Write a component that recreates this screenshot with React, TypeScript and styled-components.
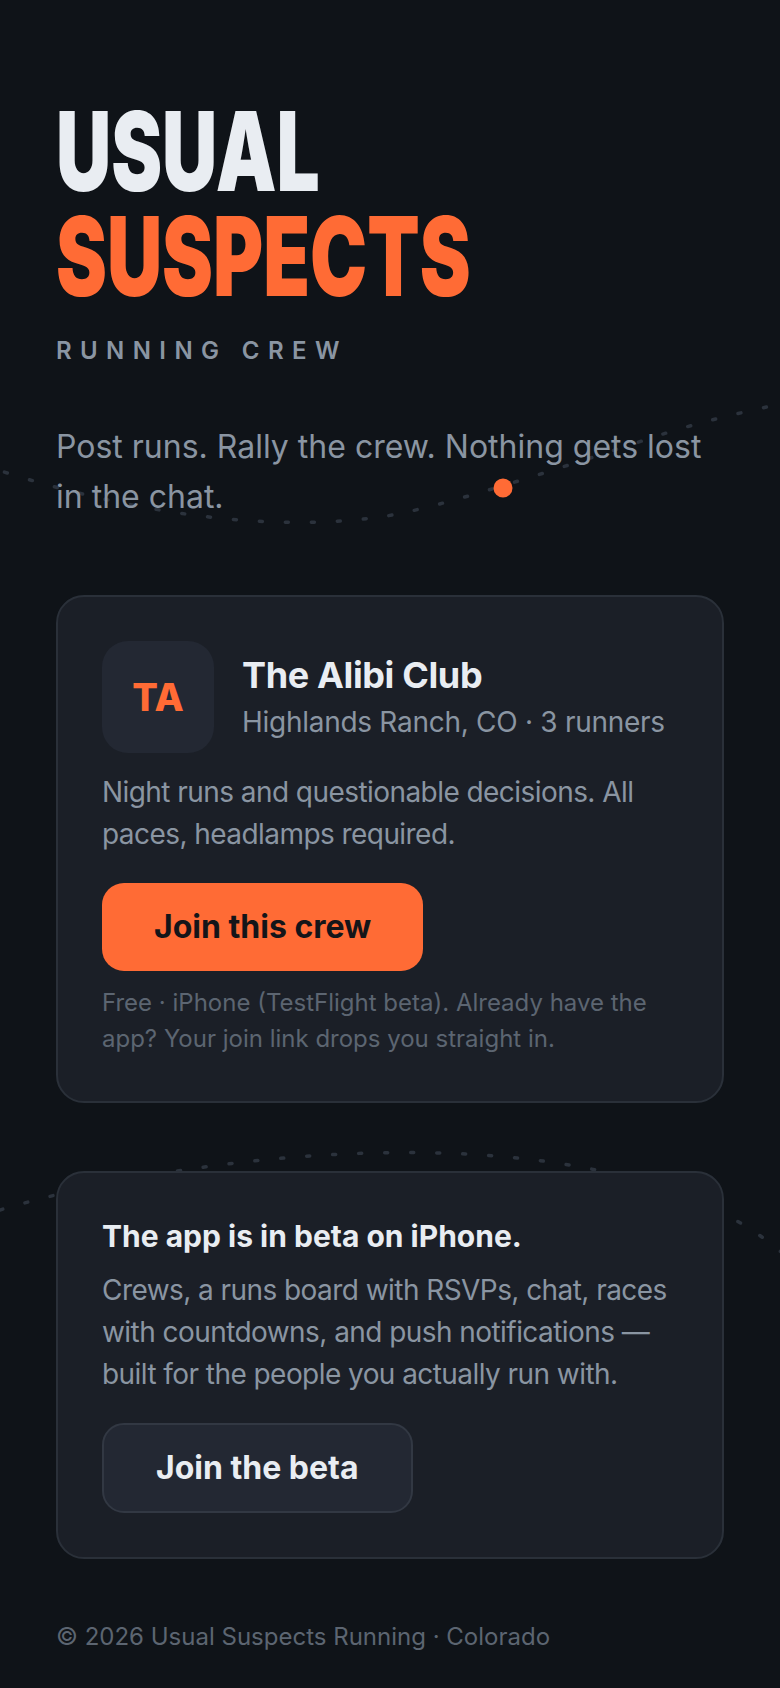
import React from 'react';
import styled, { createGlobalStyle } from 'styled-components';

const color = {
  bg: '#0f1318',
  card: '#1b1f27',
  cardBorder: '#2a3039',
  tile: '#232833',
  tileBorder: '#323843',
  text: '#e9edf2',
  muted: '#8a95a2',
  faint: '#5c6571',
  accent: '#ff6b35',
  trail: '#2b323c',
};

const GlobalStyle = createGlobalStyle`
  html, body {
    margin: 0;
    padding: 0;
    background: ${color.bg};
  }
  body {
    font-family: Inter, "Noto Sans", "Liberation Sans", sans-serif;
    -webkit-font-smoothing: antialiased;
  }
  * {
    box-sizing: border-box;
  }
`;

export default function App() {
  return (
    <Page>
      <GlobalStyle />
      <Trails viewBox="0 0 780 1688" aria-hidden="true">
        <path
          d="M -20 464 C 100 505, 250 535, 380 517 C 440 509, 590 458, 660 435 C 700 422, 750 410, 800 400"
          className="trail"
        />
        <circle cx="503" cy="488" r="9.5" fill={color.accent} />
        <path d="M 0 1210 C 200 1150, 620 1100, 790 1260" className="trail" />
      </Trails>

      <Content>
        <Hero>
          <Wordmark>
            <span>Usual</span>
            <span className="accent">Suspects</span>
          </Wordmark>
          <Kicker>Running crew</Kicker>
          <Tagline>Post runs. Rally the crew. Nothing gets lost in the chat.</Tagline>
        </Hero>

        <Card>
          <CrewHeader>
            <Avatar>TA</Avatar>
            <div>
              <CrewName>The Alibi Club</CrewName>
              <CrewMeta>Highlands Ranch, CO · 3 runners</CrewMeta>
            </div>
          </CrewHeader>
          <Body $gap={18}>Night runs and questionable decisions. All paces, headlamps required.</Body>
          <Button $variant="primary">Join this crew</Button>
          <FinePrint>
            Free · iPhone (TestFlight beta). Already have the app? Your join link drops you straight in.
          </FinePrint>
        </Card>

        <Card $gap={68}>
          <CardTitle>The app is in beta on iPhone.</CardTitle>
          <Body $gap={13}>
            Crews, a runs board with RSVPs, chat, races with countdowns, and push notifications — built for the
            people you actually run with.
          </Body>
          <Button $variant="secondary">Join the beta</Button>
        </Card>

        <Footer>© 2026 Usual Suspects Running · Colorado</Footer>
      </Content>
    </Page>
  );
}

const Page = styled.div`
  position: relative;
  min-height: 1688px;
  overflow: hidden;
  background: ${color.bg};
`;

const Trails = styled.svg`
  position: absolute;
  inset: 0;
  width: 780px;
  height: 1688px;
  pointer-events: none;

  .trail {
    fill: none;
    stroke: ${color.trail};
    stroke-width: 3.5;
    stroke-linecap: round;
    stroke-dasharray: 3 23;
  }
`;

const Content = styled.main`
  position: relative;
  z-index: 1;
  padding: 99px 56px 35px;
`;

const Hero = styled.header`
  display: flex;
  flex-direction: column;
`;

const Wordmark = styled.h1`
  margin: 0;
  display: flex;
  flex-direction: column;
  font-family: Inter, "Liberation Sans", sans-serif;
  font-weight: 900;
  font-size: 110px;
  line-height: 105px;
  text-transform: uppercase;
  color: ${color.text};
  transform: scaleX(0.695);
  transform-origin: left center;

  .accent {
    color: ${color.accent};
  }
`;

const Kicker = styled.p`
  margin: 28px 0 0;
  font-size: 24px;
  line-height: 1.2;
  font-weight: 600;
  letter-spacing: 0.35em;
  text-transform: uppercase;
  color: ${color.muted};
`;

const Tagline = styled.p`
  margin: 56px 0 0;
  font-size: 32px;
  line-height: 50px;
  color: ${color.muted};
`;

const Card = styled.section<{ $gap?: number }>`
  margin-top: ${({ $gap }) => $gap ?? 73}px;
  padding: 44px;
  background: ${color.card};
  border: 2px solid ${color.cardBorder};
  border-radius: 28px;
  display: flex;
  flex-direction: column;
  align-items: flex-start;
`;

const CrewHeader = styled.div`
  display: flex;
  align-items: center;
  gap: 28px;
`;

const Avatar = styled.div`
  width: 112px;
  height: 112px;
  flex-shrink: 0;
  border-radius: 26px;
  background: ${color.tile};
  display: flex;
  align-items: center;
  justify-content: center;
  font-size: 38px;
  font-weight: 800;
  color: ${color.accent};
`;

const CrewName = styled.h2`
  margin: 0;
  font-size: 36px;
  line-height: 1.3;
  font-weight: 700;
  letter-spacing: -0.01em;
  color: ${color.text};
`;

const CrewMeta = styled.p`
  margin: 4px 0 0;
  font-size: 28px;
  line-height: 1.4;
  letter-spacing: -0.01em;
  color: ${color.muted};
`;

const CardTitle = styled.h3`
  margin: 0;
  font-size: 30px;
  line-height: 1.3;
  font-weight: 700;
  color: ${color.text};
`;

const Body = styled.p<{ $gap: number }>`
  margin: ${({ $gap }) => $gap}px 0 0;
  font-size: 28px;
  line-height: 42px;
  letter-spacing: -0.02em;
  color: ${color.muted};
`;

const Button = styled.button<{ $variant: 'primary' | 'secondary' }>`
  margin-top: 28px;
  height: ${({ $variant }) => ($variant === 'primary' ? 88 : 90)}px;
  padding: 0 52px;
  display: inline-flex;
  align-items: center;
  border-radius: 22px;
  font-family: inherit;
  font-size: 32px;
  font-weight: 700;
  cursor: pointer;
  background: ${({ $variant }) => ($variant === 'primary' ? color.accent : color.tile)};
  color: ${({ $variant }) => ($variant === 'primary' ? '#141519' : color.text)};
  border: ${({ $variant }) => ($variant === 'primary' ? 'none' : `2px solid ${color.tileBorder}`)};
`;

const FinePrint = styled.p`
  margin: 14px 0 0;
  font-size: 24px;
  line-height: 36px;
  color: ${color.faint};
`;

const Footer = styled.footer`
  margin-top: 60px;
  font-size: 24px;
  line-height: 36px;
  color: ${color.faint};
`;
